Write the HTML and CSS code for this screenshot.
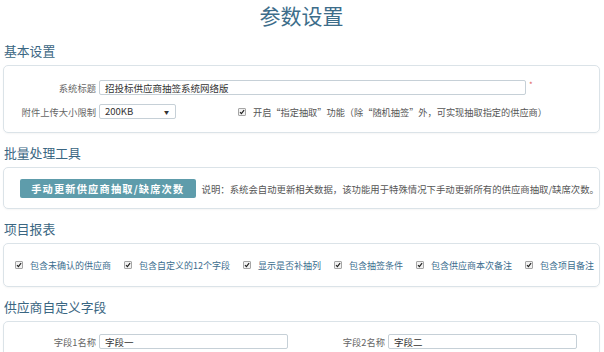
FILE: index.html
```html
<!DOCTYPE html>
<html lang="zh-CN">
<head>
    <meta charset="UTF-8">
    <meta name="viewport" content="width=device-width, initial-scale=1.0">
    <title>参数设置</title>
    <link rel="stylesheet" href="styles.css">
</head>
<body>

    <h1 class="page-title">参数设置</h1>

    <!-- 基本设置 -->
    <h2 class="section-title">基本设置</h2>
    <div class="panel panel-basic">
        <div class="form-row">
            <label class="form-label">系统标题</label>
            <input type="text" class="form-input input-title" value="招投标供应商抽签系统网络版">
            <span class="required">*</span>
        </div>
        <div class="form-row">
            <label class="form-label">附件上传大小限制</label>
            <div class="select-wrap">
                <select class="form-select">
                    <option>200KB</option>
                    <option>500KB</option>
                    <option>1MB</option>
                </select>
                <span class="select-arrow">▼</span>
            </div>
            <label class="check-item check-assign">
                <span class="check-box"><svg viewBox="0 0 8 8"><path d="M1.3 4.2 L3.2 6.1 L6.8 1.6" /></svg></span>
                <span class="check-text">开启“指定抽取”功能（除“随机抽签”外，可实现抽取指定的供应商）</span>
            </label>
        </div>
    </div>

    <!-- 批量处理工具 -->
    <h2 class="section-title">批量处理工具</h2>
    <div class="panel panel-tools">
        <button class="btn-update">手动更新供应商抽取/缺席次数</button>
        <span class="tool-note">说明：系统会自动更新相关数据，该功能用于特殊情况下手动更新所有的供应商抽取/缺席次数。</span>
    </div>

    <!-- 项目报表 -->
    <h2 class="section-title">项目报表</h2>
    <div class="panel panel-report">
        <label class="check-item">
            <span class="check-box"><svg viewBox="0 0 8 8"><path d="M1.3 4.2 L3.2 6.1 L6.8 1.6" /></svg></span>
            <span class="report-text">包含未确认的供应商</span>
        </label>
        <label class="check-item">
            <span class="check-box"><svg viewBox="0 0 8 8"><path d="M1.3 4.2 L3.2 6.1 L6.8 1.6" /></svg></span>
            <span class="report-text">包含自定义的12个字段</span>
        </label>
        <label class="check-item">
            <span class="check-box"><svg viewBox="0 0 8 8"><path d="M1.3 4.2 L3.2 6.1 L6.8 1.6" /></svg></span>
            <span class="report-text">显示是否补抽列</span>
        </label>
        <label class="check-item">
            <span class="check-box"><svg viewBox="0 0 8 8"><path d="M1.3 4.2 L3.2 6.1 L6.8 1.6" /></svg></span>
            <span class="report-text">包含抽签条件</span>
        </label>
        <label class="check-item">
            <span class="check-box"><svg viewBox="0 0 8 8"><path d="M1.3 4.2 L3.2 6.1 L6.8 1.6" /></svg></span>
            <span class="report-text">包含供应商本次备注</span>
        </label>
        <label class="check-item">
            <span class="check-box"><svg viewBox="0 0 8 8"><path d="M1.3 4.2 L3.2 6.1 L6.8 1.6" /></svg></span>
            <span class="report-text">包含项目备注</span>
        </label>
    </div>

    <!-- 供应商自定义字段 -->
    <h2 class="section-title">供应商自定义字段</h2>
    <div class="panel panel-fields">
        <div class="field-col">
            <label class="form-label">字段1名称</label>
            <input type="text" class="form-input input-field" value="字段一">
        </div>
        <div class="field-col">
            <label class="form-label">字段2名称</label>
            <input type="text" class="form-input input-field" value="字段二">
        </div>
    </div>

</body>
</html>
```

FILE: styles.css
```css
body {
    font-family: "Noto Sans CJK SC", "Noto Sans", sans-serif;
    margin: 0;
    padding: 0 4px 0 3px;
    background-color: #ffffff;
    color: #555;
}

.page-title {
    margin: 0;
    padding-top: 2px;
    height: 37px;
    line-height: 26px;
    font-size: 21px;
    font-weight: normal;
    text-align: center;
    color: #3d6d8a;
}

.section-title {
    margin: 3px 0 6px 1px;
    height: 17px;
    line-height: 17px;
    font-size: 12.8px;
    font-weight: normal;
    color: #3a6682;
}

.panel {
    border: 1px solid #dbe3e8;
    border-radius: 5px;
    box-shadow: 0 1px 2px rgba(0, 0, 0, 0.04);
    margin-bottom: 11px;
}

/* 基本设置 */
.panel-basic {
    padding: 14px 0 13px 0;
    display: flex;
    flex-direction: column;
    gap: 9px;
}

.form-row {
    display: flex;
    align-items: center;
    height: 15px;
}

.form-label {
    width: 92px;
    margin-right: 3px;
    text-align: right;
    font-size: 9.3px;
    color: #666;
    white-space: nowrap;
}

.form-input {
    box-sizing: border-box;
    height: 15px;
    padding: 0 5px;
    border: 1px solid #c6d0d7;
    border-radius: 2px;
    font-family: inherit;
    font-size: 9.5px;
    color: #333;
    outline: none;
}

.input-title {
    width: 427px;
}

.required {
    margin-left: 3px;
    font-size: 8px;
    color: #e06060;
    align-self: flex-start;
    line-height: 10px;
}

.select-wrap {
    position: relative;
    width: 77px;
    height: 15px;
}

.form-select {
    display: block;
    appearance: none;
    box-sizing: border-box;
    width: 77px;
    height: 15px;
    margin: 0;
    padding: 0 5px;
    border: 1px solid #c6d0d7;
    border-radius: 2px;
    background-color: #fff;
    font-family: inherit;
    font-size: 9.5px;
    line-height: 13px;
    color: #333;
    outline: none;
}

.select-arrow {
    position: absolute;
    right: 7px;
    top: 4px;
    font-size: 5px;
    line-height: 7px;
    color: #333;
    pointer-events: none;
}

.check-item {
    display: inline-flex;
    align-items: center;
    margin-right: 13px;
    white-space: nowrap;
}

.check-box {
    box-sizing: border-box;
    width: 8px;
    height: 8px;
    border: 1px solid #a5a5a5;
    border-radius: 1px;
    background-color: #f2f2f2;
    margin-right: 7px;
    display: inline-flex;
}

.check-box svg {
    width: 6px;
    height: 6px;
}

.check-box path {
    fill: none;
    stroke: #222;
    stroke-width: 1.6;
}

.check-assign {
    margin-left: 62px;
}

.check-text {
    font-size: 9.2px;
    color: #555;
}

/* 批量处理工具 */
.panel-tools {
    display: flex;
    align-items: center;
    padding: 11px 0 10px 16px;
}

.btn-update {
    width: 177px;
    height: 19px;
    padding: 0;
    border: none;
    border-radius: 2px;
    background-color: #5e9cab;
    color: #fff;
    font-family: inherit;
    font-size: 10.2px;
    font-weight: bold;
    letter-spacing: 1.2px;
    cursor: pointer;
}

.btn-update:hover {
    background-color: #4f8c9b;
}

.tool-note {
    margin-left: 6px;
    font-size: 9.4px;
    color: #555;
    white-space: nowrap;
}

/* 项目报表 */
.panel-report {
    display: flex;
    align-items: center;
    height: 14px;
    padding: 14px 0 14px 11px;
}

.report-text {
    font-size: 9px;
    color: #3b6d8e;
}

/* 供应商自定义字段 */
.panel-fields {
    display: flex;
    padding: 12px 0 12px 0;
}

.field-col {
    display: flex;
    align-items: center;
    width: 289px;
}

.input-field {
    width: 189px;
}
```
